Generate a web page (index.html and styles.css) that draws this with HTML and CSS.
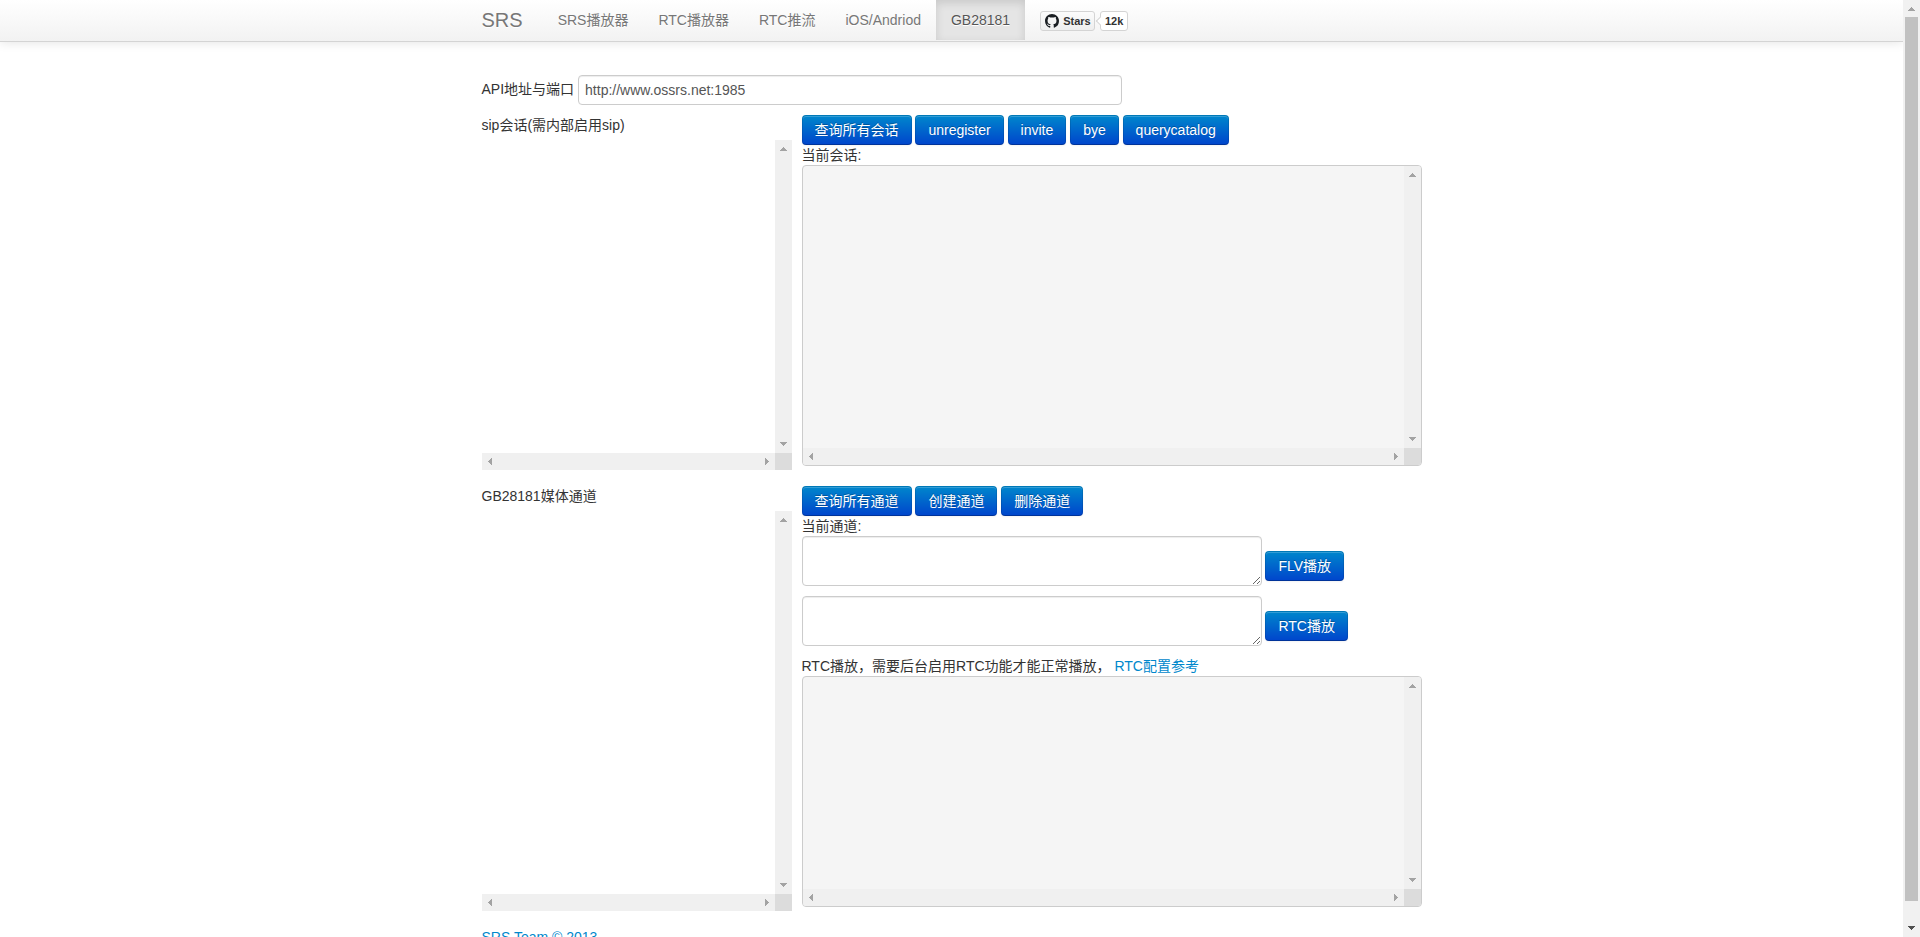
FILE: index.html
```
<!DOCTYPE html>
<html lang="zh">
<head>
	<meta charset="utf-8" />
	<title>SRS</title>
	<link rel="stylesheet" href="styles.css">
</head>
<body>
	<!-- scrollbar arrows -->
	<svg class="defs" width="0" height="0">
		<symbol id="up" viewBox="0 0 7 4"><path d="M3 0h1v1h1v1h1v1h1v1H0V3h1V2h1V1h1z"/></symbol>
		<symbol id="down" viewBox="0 0 7 4"><path d="M0 0h7v1H6v1H5v1H4v1H3V3H2V2H1V1H0z"/></symbol>
		<symbol id="left" viewBox="0 0 4 7"><path d="M4 0v7H3V6H2V5H1V4H0V3h1V2h1V1h1V0z"/></symbol>
		<symbol id="right" viewBox="0 0 4 7"><path d="M0 0v7h1V6h1V5h1V4h1V3H3V2H2V1H1V0z"/></symbol>
	</svg>

	<div class="page">
		<div class="navbar">
			<div class="container navbar-inner">
				<a class="brand" href="#">SRS</a>
				<ul class="nav">
					<li><a href="#">SRS播放器</a></li>
					<li><a href="#">RTC播放器</a></li>
					<li><a href="#">RTC推流</a></li>
					<li><a href="#">iOS/Andriod</a></li>
					<li class="active"><a href="#">GB28181</a></li>
				</ul>
				<div class="github">
					<a class="gh-btn" href="#">
						<svg width="14" height="14" viewBox="0 0 16 16"><path fill-rule="evenodd" d="M8 0C3.58 0 0 3.58 0 8c0 3.54 2.29 6.53 5.47 7.59.4.07.55-.17.55-.38 0-.19-.01-.82-.01-1.49-2.01.37-2.53-.49-2.69-.94-.09-.23-.48-.94-.82-1.13-.28-.15-.68-.52-.01-.53.63-.01 1.08.58 1.23.82.72 1.21 1.87.87 2.33.66.07-.52.28-.87.51-1.07-1.78-.2-3.64-.89-3.64-3.95 0-.87.31-1.59.82-2.15-.08-.2-.36-1.02.08-2.12 0 0 .67-.21 2.2.82.64-.18 1.32-.27 2-.27s1.36.09 2 .27c1.53-1.04 2.2-.82 2.2-.82.44 1.1.16 1.92.08 2.12.51.56.82 1.27.82 2.15 0 3.07-1.87 3.75-3.65 3.95.29.25.54.73.54 1.48 0 1.07-.01 1.93-.01 2.2 0 .21.15.46.55.38A8.01 8.01 0 0 0 16 8c0-4.42-3.58-8-8-8z"/></svg>
						<span>Stars</span>
					</a>
					<a class="gh-count" href="#">12k</a>
				</div>
			</div>
		</div>

		<div class="container main">
			<div class="api">
				<span>API地址与端口</span>
				<input type="text" value="http://www.ossrs.net:1985">
			</div>

			<!-- sip -->
			<div class="row">
				<div class="side">
					<div class="title">sip会话(需内部启用sip)</div>
					<div class="scroll sip-list">
						<div class="view"></div>
						<div class="vbar"><svg width="7" height="4"><use href="#up"/></svg><svg width="7" height="4"><use href="#down"/></svg></div>
						<div class="hbar"><svg width="4" height="7"><use href="#left"/></svg><svg width="4" height="7"><use href="#right"/></svg></div>
						<div class="corner"></div>
					</div>
				</div>
				<div class="content">
					<div class="btns">
						<button class="btn">查询所有会话</button>
						<button class="btn">unregister</button>
						<button class="btn">invite</button>
						<button class="btn">bye</button>
						<button class="btn">querycatalog</button>
					</div>
					<div>当前会话:</div>
					<div class="scroll pre sip-info">
						<div class="view"></div>
						<div class="vbar"><svg width="7" height="4"><use href="#up"/></svg><svg width="7" height="4"><use href="#down"/></svg></div>
						<div class="hbar"><svg width="4" height="7"><use href="#left"/></svg><svg width="4" height="7"><use href="#right"/></svg></div>
						<div class="corner"></div>
					</div>
				</div>
			</div>

			<!-- GB28181 -->
			<div class="row">
				<div class="side">
					<div class="title">GB28181媒体通道</div>
					<div class="scroll gb-list">
						<div class="view"></div>
						<div class="vbar"><svg width="7" height="4"><use href="#up"/></svg><svg width="7" height="4"><use href="#down"/></svg></div>
						<div class="hbar"><svg width="4" height="7"><use href="#left"/></svg><svg width="4" height="7"><use href="#right"/></svg></div>
						<div class="corner"></div>
					</div>
				</div>
				<div class="content">
					<div class="btns">
						<button class="btn">查询所有通道</button>
						<button class="btn">创建通道</button>
						<button class="btn">删除通道</button>
					</div>
					<div>当前通道:</div>
					<div class="play">
						<textarea></textarea>
						<button class="btn">FLV播放</button>
					</div>
					<div class="play">
						<textarea></textarea>
						<button class="btn">RTC播放</button>
					</div>
					<div>RTC播放，需要后台启用RTC功能才能正常播放， <a href="#">RTC配置参考</a></div>
					<div class="scroll pre gb-info">
						<div class="view"></div>
						<div class="vbar"><svg width="7" height="4"><use href="#up"/></svg><svg width="7" height="4"><use href="#down"/></svg></div>
						<div class="hbar"><svg width="4" height="7"><use href="#left"/></svg><svg width="4" height="7"><use href="#right"/></svg></div>
						<div class="corner"></div>
					</div>
				</div>
			</div>

			<div class="footer"><a href="#">SRS Team © 2013</a></div>
		</div>
	</div>

	<div class="page-bar">
		<svg width="7" height="4"><use href="#up"/></svg>
		<div class="thumb"></div>
		<svg class="dark" width="7" height="4"><use href="#down"/></svg>
	</div>
</body>
</html>
```
FILE: styles.css
```
*{
	box-sizing: border-box;
}
html{
	height: 100%;
}
body{
	display: grid;
	grid-template-columns: 1fr 17px;
	height: 100%;
	margin: 0;
	overflow: hidden;
	background: #fff;
	color: #333;
	font: 14px/20px "Liberation Sans", "Noto Sans CJK SC", sans-serif;
}
a{
	color: #08c;
	text-decoration: none;
}
.defs{
	position: absolute;
}
.page{
	min-width: 0;
	height: 100vh;
	overflow: hidden;
}
.container{
	width: 940px;
	margin: 0 auto;
}

/*navbar*/
.navbar{
	height: 42px;
	border-bottom: 1px solid #d4d4d4;
	background: linear-gradient(to bottom, #fff, #f2f2f2);
	box-shadow: 0 1px 10px rgba(0,0,0,0.1);
}
.navbar-inner{
	display: flex;
	align-items: flex-start;
}
.brand{
	padding: 10px 20px 10px 0;
	font-size: 20px;
	color: #777;
	text-shadow: 0 1px 0 #fff;
}
.nav{
	display: flex;
	margin: 0;
	padding: 0;
	list-style: none;
}
.nav a{
	display: block;
	height: 40px;
	padding: 10px 15px;
	color: #777;
	text-shadow: 0 1px 0 #fff;
}
.nav .active a{
	color: #555;
	background: #e5e5e5;
	box-shadow: inset 0 3px 8px rgba(0,0,0,0.125);
}
.github{
	display: flex;
	margin: 11px 0 0 15px;
	font: bold 11px/18px "Liberation Sans", sans-serif;
}
.github a{
	color: #333;
	height: 20px;
	border: 1px solid #d4d4d4;
	border-radius: 3px;
}
.gh-btn{
	display: flex;
	align-items: center;
	gap: 4px;
	width: 55px;
	padding-left: 4px;
	background: linear-gradient(to bottom, #fcfcfc, #eee);
}
.gh-btn svg{
	fill: #1b1f23;
}
.gh-count{
	position: relative;
	width: 28px;
	margin-left: 5px;
	text-align: center;
	background: #fff;
}
.gh-count:before{
	content: "";
	position: absolute;
	left: -4px;
	top: 6px;
	width: 5px;
	height: 5px;
	border: 1px solid #d4d4d4;
	border-width: 0 0 1px 1px;
	background: #fff;
	transform: rotate(45deg);
}

/*main*/
.main{
	padding-top: 33px;
}
.api{
	display: flex;
	align-items: flex-start;
	gap: 4px;
	height: 40px;
}
.api span{
	padding-top: 4px;
}
input, textarea{
	margin: 0 0 10px;
	padding: 4px 6px;
	border: 1px solid #ccc;
	border-radius: 4px;
	background: #fff;
	color: #555;
	font: inherit;
	vertical-align: middle;
	box-shadow: inset 0 1px 1px rgba(0,0,0,0.075);
}
input{
	width: 544px;
	height: 30px;
}
textarea{
	width: 460px;
	height: 50px;
}
.row{
	display: flex;
	gap: 10px;
	margin-bottom: 16px;
}
.side{
	width: 310px;
}
.title{
	margin-bottom: 5px;
}
.content{
	width: 620px;
}
.btns, .play .btn{
	height: 30px;
}
.play{
	height: 60px;
}
.btn{
	height: 30px;
	margin: 0;
	padding: 4px 12px;
	border: 1px solid;
	border-color: rgba(0,0,0,0.1) rgba(0,0,0,0.1) rgba(0,0,0,0.25);
	border-radius: 4px;
	background: #0064cc linear-gradient(to bottom, #08c, #04c) border-box;
	color: #fff;
	font: inherit;
	text-shadow: 0 -1px 0 rgba(0,0,0,0.25);
	vertical-align: middle;
	box-shadow: inset 0 1px 0 rgba(255,255,255,0.2), 0 1px 2px rgba(0,0,0,0.05);
}
.btns .btn{
	vertical-align: top;
}

/*scroll boxes*/
.scroll{
	display: grid;
	grid-template-columns: 1fr 17px;
	grid-template-rows: 1fr 17px;
	overflow: hidden;
}
.pre{
	border: 1px solid #ccc;
	border-radius: 4px;
	background: #f5f5f5;
}
.sip-list{
	height: 330px;
}
.sip-info{
	height: 301px;
}
.gb-list{
	height: 400px;
}
.gb-info{
	height: 231px;
}
.vbar, .hbar{
	display: flex;
	align-items: center;
	justify-content: space-between;
	background: #f0f0f0;
	fill: #a3a3a3;
}
.vbar{
	flex-direction: column;
	padding: 7px 0;
}
.hbar{
	padding: 0 6px;
}
.corner{
	background: #dcdcdc;
}
.page-bar{
	display: flex;
	flex-direction: column;
	align-items: center;
	height: 100vh;
	padding: 7px 0;
	background: #f1f1f1;
	fill: #a3a3a3;
}
.thumb{
	width: 13px;
	height: 884px;
	margin: 6px 0 auto;
	background: #c1c1c1;
}
.page-bar svg{
	flex: none;
}
.page-bar .dark{
	fill: #505050;
}
```
